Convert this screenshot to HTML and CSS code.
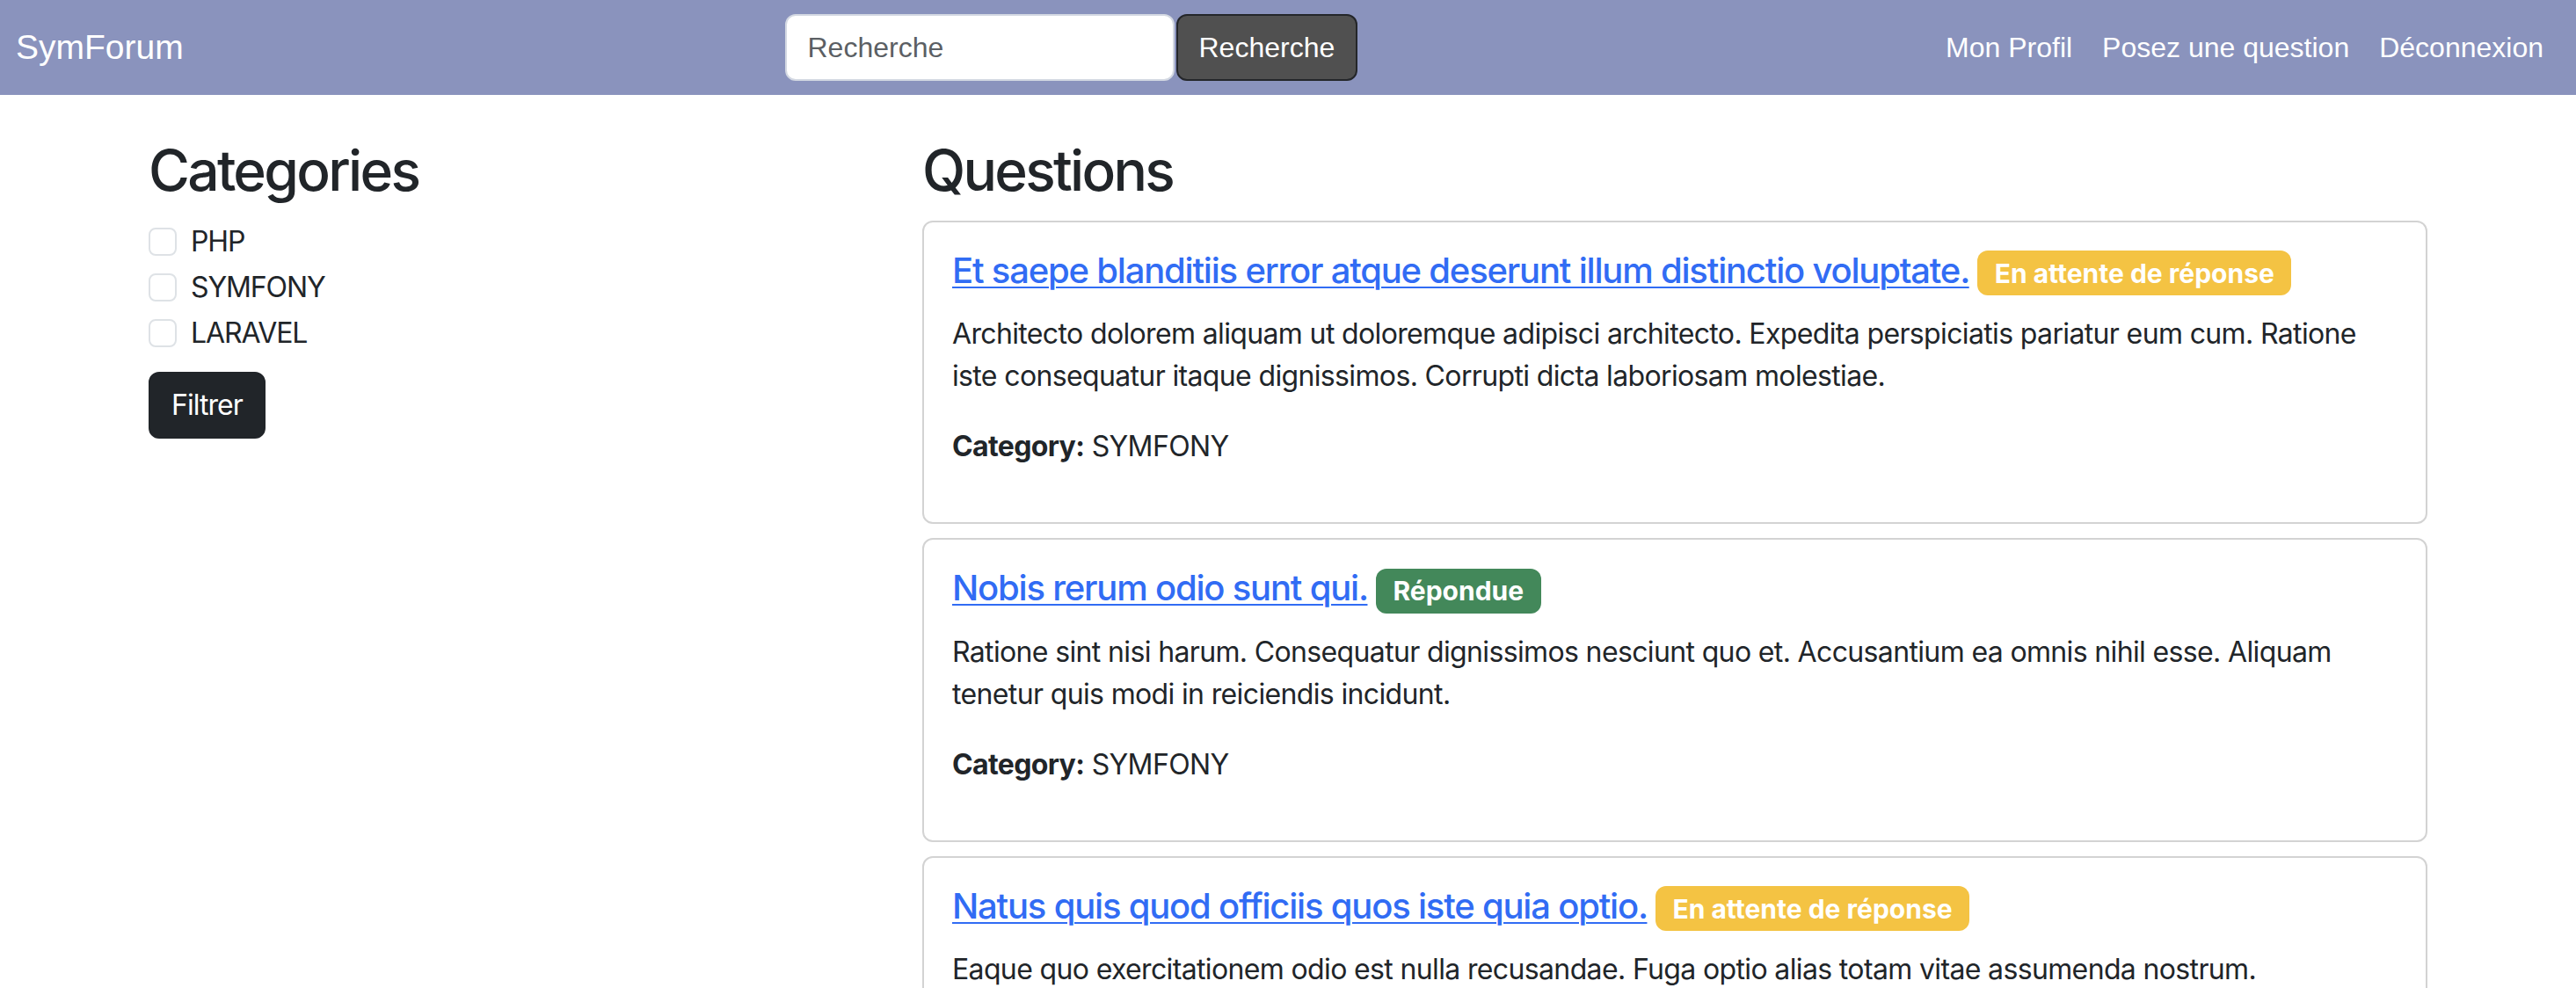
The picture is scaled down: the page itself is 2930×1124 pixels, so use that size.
FILE: index.html
```html
<!DOCTYPE html>
<html lang="fr">
<head>
<meta charset="utf-8">
<title>SymForum</title>
<link rel="stylesheet" href="styles.css">
</head>
<body>
<nav class="navbar">
  <a class="brand" href="#">SymForum</a>
  <form class="search">
    <input class="search-input" type="search" placeholder="Recherche">
    <button class="search-btn" type="button">Recherche</button>
  </form>
  <ul class="nav-links">
    <li><a class="nav-link" href="#">Mon Profil</a></li>
    <li><a class="nav-link" href="#">Posez une question</a></li>
    <li><a class="nav-link" href="#">Déconnexion</a></li>
  </ul>
</nav>

<main class="container">
  <div class="row">
    <aside class="col-side">
      <h2 class="heading">Categories</h2>
      <form class="filter">
        <div class="check"><input class="check-input" type="checkbox" id="c1"><label for="c1">PHP</label></div>
        <div class="check"><input class="check-input" type="checkbox" id="c2"><label for="c2">SYMFONY</label></div>
        <div class="check"><input class="check-input" type="checkbox" id="c3"><label for="c3">LARAVEL</label></div>
        <button class="btn-dark" type="button">Filtrer</button>
      </form>
    </aside>
    <section class="col-main">
      <h2 class="heading">Questions</h2>

      <div class="card">
        <div class="card-body">
          <h5 class="card-title"><a href="#">Et saepe blanditiis error atque deserunt illum distinctio voluptate.</a> <span class="badge badge-wait">En attente de réponse</span></h5>
          <p class="card-text">Architecto dolorem aliquam ut doloremque adipisci architecto. Expedita perspiciatis pariatur eum cum. Ratione iste consequatur itaque dignissimos. Corrupti dicta laboriosam molestiae.</p>
          <p class="card-text"><strong>Category:</strong> SYMFONY</p>
        </div>
      </div>

      <div class="card">
        <div class="card-body">
          <h5 class="card-title"><a href="#">Nobis rerum odio sunt qui.</a> <span class="badge badge-done">Répondue</span></h5>
          <p class="card-text">Ratione sint nisi harum. Consequatur dignissimos nesciunt quo et. Accusantium ea omnis nihil esse. Aliquam tenetur quis modi in reiciendis incidunt.</p>
          <p class="card-text"><strong>Category:</strong> SYMFONY</p>
        </div>
      </div>

      <div class="card">
        <div class="card-body">
          <h5 class="card-title"><a href="#">Natus quis quod officiis quos iste quia optio.</a> <span class="badge badge-wait">En attente de réponse</span></h5>
          <p class="card-text">Eaque quo exercitationem odio est nulla recusandae. Fuga optio alias totam vitae assumenda nostrum.</p>
          <p class="card-text"><strong>Category:</strong> LARAVEL</p>
        </div>
      </div>
    </section>
  </div>
</main>
</body>
</html>
```

FILE: styles.css
```css
* { box-sizing: border-box; }

html, body { margin: 0; padding: 0; }

body {
  font-family: Inter, "Noto Sans", sans-serif;
  font-size: 32px;
  line-height: 1.5;
  letter-spacing: -0.02em;
  color: #212529;
  background: #fff;
}

/* Navbar */
.navbar {
  display: flex;
  align-items: center;
  justify-content: space-between;
  background: #8a93bd;
  padding: 16px 20px 16px 18px;
  font-family: "Liberation Sans", Arial, sans-serif;
  letter-spacing: 0;
}

.brand {
  color: #fff;
  font-size: 39px;
  line-height: 1.5;
  text-decoration: none;
  margin-right: 32px;
}

.search {
  display: flex;
  gap: 2px;
  margin: 0;
}

.search-input {
  width: 443px;
  height: 76px;
  padding: 12px 24px;
  font-family: "Liberation Sans", Arial, sans-serif;
  font-size: 32px;
  line-height: 1.5;
  color: #212529;
  background: #fff;
  border: 2px solid #d3d8e2;
  border-radius: 12px;
  outline: none;
}

.search-input::placeholder { color: #5b5f64; }

.search-btn {
  height: 76px;
  padding: 12px 24px;
  font-family: "Liberation Sans", Arial, sans-serif;
  font-size: 32px;
  line-height: 1.5;
  color: #fff;
  background: #505050;
  border: 2px solid #24262a;
  border-radius: 12px;
}

.nav-links {
  display: flex;
  list-style: none;
  margin: 0;
  padding: 0;
}

.nav-link {
  display: block;
  padding: 14px 17px;
  color: #fff;
  font-size: 32px;
  line-height: 1.5;
  text-decoration: none;
}

/* Layout */
.container {
  max-width: 2640px;
  margin: 48px auto 0;
  padding: 0 24px;
}

.row {
  display: flex;
  margin: 0 -24px;
}

.col-side {
  flex: 0 0 33.3333%;
  padding: 0 24px;
}

.col-main {
  flex: 0 0 66.6667%;
  padding: 0 24px;
}

.heading {
  font-size: 64px;
  font-weight: 500;
  line-height: 1.2;
  letter-spacing: -0.042em;
  margin: 0 0 18px;
}

/* Filter */
.filter { margin: 0; }

.check {
  min-height: 48px;
  padding-left: 48px;
  margin-bottom: 4px;
}

.check-input {
  appearance: none;
  float: left;
  width: 32px;
  height: 32px;
  margin: 8px 0 0 -48px;
  border: 2px solid #dee2e6;
  border-radius: 8px;
  background: #fff;
}

.check label {
  font-size: 32px;
  letter-spacing: -0.035em;
}

.btn-dark {
  margin-top: 16px;
  padding: 12px 24px;
  font-family: Inter, "Noto Sans", sans-serif;
  font-size: 32px;
  line-height: 1.5;
  letter-spacing: -0.03em;
  color: #fff;
  background: #212529;
  border: 2px solid #212529;
  border-radius: 12px;
}

/* Cards */
.card {
  border: 2px solid #d3d3d3;
  border-radius: 12px;
  margin-bottom: 16px;
  background: #fff;
}

.card-body { padding: 31px 32px 30px; }

.card-title {
  font-size: 40px;
  font-weight: 500;
  line-height: 1.2;
  letter-spacing: -0.03em;
  margin: 0 0 20px;
}

.card-title a {
  color: #316cf4;
  text-decoration: underline;
  text-decoration-thickness: 2px;
  text-underline-offset: 4px;
}

.badge {
  display: inline-block;
  font-size: 30px;
  font-weight: 700;
  line-height: 1;
  letter-spacing: 0;
  padding: 10.5px 19.5px;
  border-radius: 12px;
  color: #fff;
  vertical-align: baseline;
  white-space: nowrap;
}

.badge-wait { background: #f4c343; }
.badge-done { background: #43885a; }

.card-text { margin: 0 0 32px; }

.card-text strong { font-weight: 700; }
```
